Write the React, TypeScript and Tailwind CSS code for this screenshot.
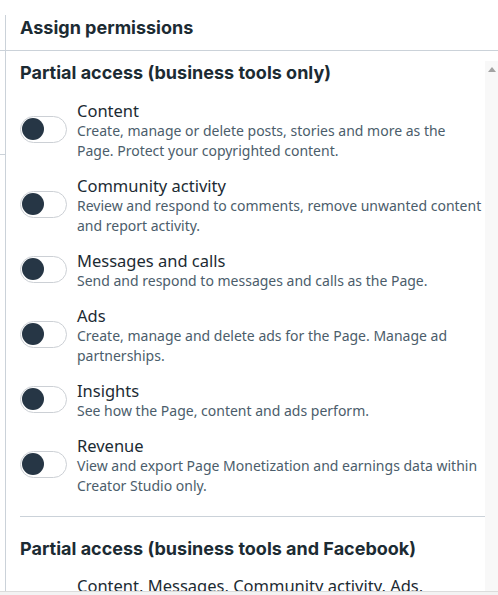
import React from "react";

const rows: { title: string; lines: string[] }[] = [
  {
    title: "Content",
    lines: [
      "Create, manage or delete posts, stories and more as the",
      "Page. Protect your copyrighted content.",
    ],
  },
  {
    title: "Community activity",
    lines: [
      "Review and respond to comments, remove unwanted content",
      "and report activity.",
    ],
  },
  {
    title: "Messages and calls",
    lines: ["Send and respond to messages and calls as the Page."],
  },
  {
    title: "Ads",
    lines: [
      "Create, manage and delete ads for the Page. Manage ad",
      "partnerships.",
    ],
  },
  {
    title: "Insights",
    lines: ["See how the Page, content and ads perform."],
  },
  {
    title: "Revenue",
    lines: [
      "View and export Page Monetization and earnings data within",
      "Creator Studio only.",
    ],
  },
];

function Toggle() {
  return (
    <div className="relative mb-[3px] h-[27px] w-[47px] shrink-0 rounded-full border border-[#ccd0d5] bg-white">
      <div className="absolute left-[1px] top-[1.5px] h-[22px] w-[22px] rounded-full bg-[#263645]" />
    </div>
  );
}

export default function App() {
  const body = { fontFamily: '"Noto Sans", "Open Sans", sans-serif' };
  const head = { fontFamily: 'Inter, "Noto Sans", sans-serif' };
  return (
    <div className="relative flex h-[595px] w-[498px] flex-col overflow-hidden bg-white" style={body}>
      {/* header */}
      <div className="flex h-[51px] shrink-0 border-b border-[#cbd2d9]">
        <div className="w-[5px] shrink-0" />
        <div className="mt-[15px] flex-1 border-l border-[#cbd2d9] pl-[14px]">
          <div className="pt-[2px] text-[18px] font-bold leading-[22px] text-[#1c2b33]" style={head}>
            Assign permissions
          </div>
        </div>
      </div>

      {/* body */}
      <div className="flex min-h-0 flex-1">
        <div className="w-[5px] shrink-0">
          <div className="h-[104px] border-b border-[#cbd2d9]" />
        </div>
        <div className="flex min-w-0 flex-1 border-l border-[#cbd2d9]">
          <div className="min-w-0 flex-1 overflow-hidden pl-[14px]">
            <div className="pt-[11px] text-[18px] font-bold leading-[22px] text-[#1c2b33]" style={head}>
              Partial access (business tools only)
            </div>
            <div className="mt-[16px] flex flex-col gap-[14px]">
              {rows.map((r) => (
                <div key={r.title} className="flex items-center gap-[10px]">
                  <Toggle />
                  <div className="min-w-0 flex-1">
                    <div className="whitespace-nowrap text-[16.5px] leading-[21px] text-[#1c2b33]">{r.title}</div>
                    {r.lines.map((l) => (
                      <div key={l} className="whitespace-nowrap text-[14px] leading-[20px] text-[#4b5d6b]">
                        {l}
                      </div>
                    ))}
                  </div>
                </div>
              ))}
            </div>
            <div className="mt-[20px] border-t border-[#cbd2d9]" />
            <div className="pt-[21px] text-[18px] font-bold leading-[22px] text-[#1c2b33]" style={head}>
              Partial access (business tools and Facebook)
            </div>
            <div className="mt-[15px] pl-[57px] whitespace-nowrap text-[16.5px] leading-[21px] text-[#1c2b33]">
              Content, Messages, Community activity, Ads,
            </div>
          </div>
          {/* scrollbar */}
          <div className="mt-[10px] flex w-[13px] shrink-0 justify-center bg-[#f8f8f8] pt-[6px]">
            <div className="h-0 w-0 border-x-[4px] border-b-[5px] border-x-transparent border-b-[#a3a3a3]" />
          </div>
        </div>
      </div>

      {/* bottom */}
      <div className="h-[4px] shrink-0 border-t border-[#dcdcdc] bg-[#f3f3f3]" />
    </div>
  );
}
